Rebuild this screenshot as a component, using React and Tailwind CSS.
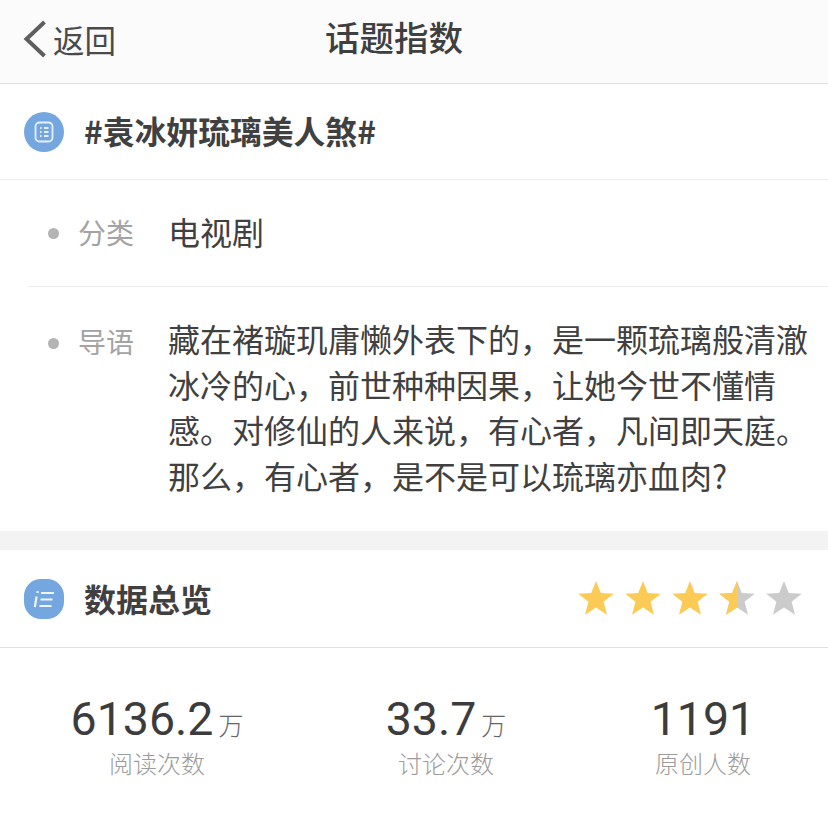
const cjk = 'font-["Noto_Sans_CJK_SC","Liberation_Sans",sans-serif]';

const STAR = '18,0 22.8,12 35.8,12.8 25.6,20.8 29,33.8 18,26.6 7,33.8 10.4,20.8 0.2,12.8 13.2,12';

function Star({ half }) {
  return (
    <svg width="36" height="34" viewBox="0 0 36 34" className="shrink-0">
      <polygon points={STAR} fill={half ? '#cbcbcb' : '#fccb55'} />
      {half && <polygon points="18,0 13.2,12 0.2,12.8 10.4,20.8 7,33.8 18,26.6" fill="#fccb55" />}
    </svg>
  );
}

function GreyStar() {
  return (
    <svg width="36" height="34" viewBox="0 0 36 34" className="shrink-0">
      <polygon points={STAR} fill="#cbcbcb" />
    </svg>
  );
}

function BackChevron() {
  return (
    <svg width="24" height="38" viewBox="0 0 24 38" fill="none" stroke="#5e5e5e" strokeWidth="4" className="shrink-0">
      <path d="M21.5 2 3.5 19l18 17" />
    </svg>
  );
}

function ListIcon() {
  return (
    <div className="w-10 h-10 rounded-full bg-[#74a7e0] flex items-center justify-center shrink-0">
      <svg width="20" height="22" viewBox="0 0 20 22" fill="none" stroke="#e6f0fb" strokeWidth="1.8">
        <rect x="1.5" y="1.5" width="17" height="19" rx="4" />
        <path d="M6 7h1.5M10 7h4.5M6 11h1.5M10 11h4.5M6 15h1.5M10 15h4.5" />
      </svg>
    </div>
  );
}

function DataIcon() {
  return (
    <div className="w-10 h-10 rounded-[17px] bg-[#74a7e0] flex items-center justify-center shrink-0">
      <svg width="22" height="18" viewBox="0 0 22 18" fill="none" stroke="#eef5fc" strokeWidth="2.2">
        <path d="M4.6 1v2M3.6 6.5 1.8 17M8 3h13M7.5 9.5h12M6.5 16h12" />
      </svg>
    </div>
  );
}

function Stat({ value, unit, label }) {
  return (
    <div className="flex flex-col items-center">
      <div className="flex items-baseline h-[46px] -mt-[1px] mb-[1px]">
        <span className='text-[46.5px] leading-[46px] text-[#3c3c3c] font-["Roboto",sans-serif]'>{value}</span>
        {unit && <span className="text-[25px] leading-[30px] text-[#666] ml-[5px] font-light">{unit}</span>}
      </div>
      <div className="text-2xl leading-8 text-[#9c9c9c] font-light mt-[4px]">{label}</div>
    </div>
  );
}

export default function App() {
  return (
    <div className={`w-[828px] h-[825px] bg-white overflow-hidden ${cjk}`}>
      {/* Nav */}
      <div className="h-[84px] bg-[#fbfbfb] border-b border-[#dedede] flex items-center relative">
        <div className="flex items-center pl-[23px] -mt-[5px]">
          <BackChevron />
          <span className="text-[31.5px] leading-10 text-[#4a4a4a] ml-[6px]">返回</span>
        </div>
        <div className="absolute inset-x-0 top-[14px] pl-[325px] text-[34.5px] leading-[44px] font-medium text-[#3f3f3f]">
          话题指数
        </div>
      </div>

      {/* Topic */}
      <div className="h-[96px] border-b border-[#ececec] flex items-center pl-6">
        <ListIcon />
        <div className="ml-5 text-[31.8px] leading-10 font-bold text-[#404040] -mt-1">#袁冰妍琉璃美人煞#</div>
      </div>

      <div className="h-[107px] flex items-center ml-[28px] border-b border-[#ececec]">
        <div className="w-[11px] h-[11px] rounded-full bg-[#b4b4b4] ml-[20px] shrink-0" />
        <div className="ml-[19px] w-[90px] text-[28px] leading-9 text-[#a3a3a3] -mt-[2px]">分类</div>
        <div className="text-[32px] leading-[46px] text-[#404040] -mt-[4px]">电视剧</div>
      </div>

      <div className="h-[244px] ml-[28px] flex items-start pt-[29px]">
        <div className="w-[11px] h-[11px] rounded-full bg-[#b4b4b4] ml-[20px] mt-[22px] shrink-0" />
        <div className="ml-[19px] w-[90px] text-[28px] leading-9 text-[#a3a3a3] mt-[7px] shrink-0">导语</div>
        <div className="text-[32px] leading-[45.7px] text-[#404040] w-[645px] shrink-0">
          藏在褚璇玑庸懒外表下的，是一颗琉璃般清澈冰冷的心，前世种种因果，让她今世不懂情感。对修仙的人来说，有心者，凡间即天庭。那么，有心者，是不是可以琉璃亦血肉?
        </div>
      </div>

      <div className="h-[19px] bg-[#f3f3f3]" />

      {/* Overview */}
      <div className="h-[98px] border-b border-[#e2e2e2] flex items-center pl-6 pr-[26px]">
        <DataIcon />
        <div className="ml-5 text-[32px] leading-10 font-bold text-[#404040] -mt-[1px]">数据总览</div>
        <div className="ml-auto flex gap-[11px] -mt-[1px]">
          <Star />
          <Star />
          <Star />
          <Star half />
          <GreyStar />
        </div>
      </div>

      <div className="grid grid-cols-[314px_264px_250px] pt-[49px]">
        <Stat value="6136.2" unit="万" label="阅读次数" />
        <Stat value="33.7" unit="万" label="讨论次数" />
        <Stat value="1191" label="原创人数" />
      </div>
    </div>
  );
}
